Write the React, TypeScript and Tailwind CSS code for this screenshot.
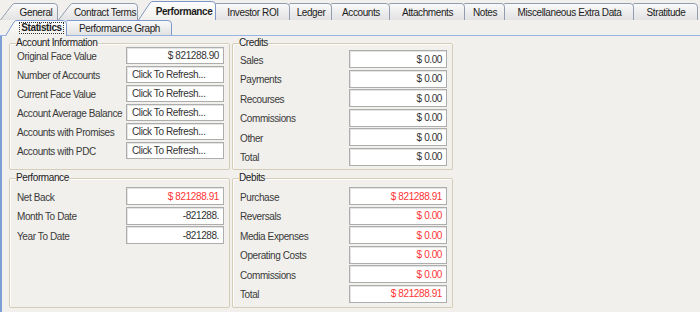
import clsx from 'clsx'

type TabDef = { label: string; w: number; cls: string; active?: boolean }

const TOP_TABS: TabDef[] = [
  { label: 'General', w: 58, cls: 'w-[58px] z-[1]' },
  { label: 'Contract Terms', w: 80, cls: 'w-[80px] z-[2]' },
  { label: 'Performance', w: 78, cls: 'w-[78px] z-[20]', active: true },
  { label: 'Investor ROI', w: 88, cls: 'w-[88px] -ml-[14px] z-[9]' },
  { label: 'Ledger', w: 56, cls: 'w-[56px] -ml-[14px] z-[8]' },
  { label: 'Accounts', w: 72, cls: 'w-[72px] -ml-[14px] z-[7]' },
  { label: 'Attachments', w: 89, cls: 'w-[89px] -ml-[14px] z-[6]' },
  { label: 'Notes', w: 54, cls: 'w-[54px] -ml-[14px] z-[5]' },
  { label: 'Miscellaneous Extra Data', w: 143, cls: 'w-[143px] -ml-[14px] z-[4]' },
  { label: 'Stratitude', w: 78, cls: 'w-[78px] -ml-[14px] z-[3]' },
]

type Row = { label: string; value: string; red?: boolean; left?: boolean }

const ACCOUNT_INFO: Row[] = [
  { label: 'Original Face Value', value: '$ 821288.90' },
  { label: 'Number of Accounts', value: 'Click To Refresh...', left: true },
  { label: 'Current Face Value', value: 'Click To Refresh...', left: true },
  { label: 'Account Average Balance', value: 'Click To Refresh...', left: true },
  { label: 'Accounts with Promises', value: 'Click To Refresh...', left: true },
  { label: 'Accounts with PDC', value: 'Click To Refresh...', left: true },
]

const CREDITS: Row[] = [
  { label: 'Sales', value: '$ 0.00' },
  { label: 'Payments', value: '$ 0.00' },
  { label: 'Recourses', value: '$ 0.00' },
  { label: 'Commissions', value: '$ 0.00' },
  { label: 'Other', value: '$ 0.00' },
  { label: 'Total', value: '$ 0.00' },
]

const PERFORMANCE: Row[] = [
  { label: 'Net Back', value: '$ 821288.91', red: true },
  { label: 'Month To Date', value: '-821288.' },
  { label: 'Year To Date', value: '-821288.' },
]

const DEBITS: Row[] = [
  { label: 'Purchase', value: '$ 821288.91', red: true },
  { label: 'Reversals', value: '$ 0.00', red: true },
  { label: 'Media Expenses', value: '$ 0.00', red: true },
  { label: 'Operating Costs', value: '$ 0.00', red: true },
  { label: 'Commissions', value: '$ 0.00', red: true },
  { label: 'Total', value: '$ 821288.91', red: true },
]

// tab outline: slanted left side, rounded top-right corner, open bottom
function tabPath(w: number, h: number, s: number) {
  return `M0.5 ${h} L${s - 2} 2 Q${s - 1} 0.5 ${s + 1} 0.5 L${w - 4} 0.5 Q${w - 0.5} 0.5 ${w - 0.5} 4 L${w - 0.5} ${h}`
}

function TabShape({ w, h, s, active, id, stroke }: { w: number; h: number; s: number; active?: boolean; id: string; stroke: string }) {
  const d = tabPath(w, h, s)
  return (
    <svg className="absolute left-0 top-0" width={w} height={h} viewBox={`0 0 ${w} ${h}`}>
      <defs>
        <linearGradient id={id} x1="0" y1="0" x2="0" y2="1">
          <stop offset="0" stopColor={active ? '#ffffff' : '#fafafa'} />
          <stop offset="1" stopColor={active ? '#f1f0ec' : '#e2e2e2'} />
        </linearGradient>
      </defs>
      <path d={d + ' Z'} fill={`url(#${id})`} />
      <path d={d} fill="none" stroke={stroke} strokeWidth="1" />
    </svg>
  )
}

function TopTab({ tab, i }: { tab: TabDef; i: number }) {
  const h = tab.active ? 19 : 17
  return (
    <div className={clsx('relative shrink-0', tab.cls, tab.active ? 'h-[19px]' : 'h-[17px]')}>
      <TabShape w={tab.w} h={h} s={14} active={tab.active} id={`top-tab-${i}`} stroke={tab.active ? '#7f97c4' : '#929daf'} />
      <div
        className={clsx(
          'relative flex h-full items-center justify-center pl-[14px] text-[#1c1c1c] whitespace-nowrap',
          tab.active ? 'font-bold pt-[1px]' : 'pt-[1px]'
        )}
      >
        {tab.label}
      </div>
    </div>
  )
}

function Field({ row, h }: { row: Row; h: string }) {
  return (
    <div className="flex items-center">
      <span className="pl-[7px] pt-[2px] text-[#3a3a3a] whitespace-nowrap">{row.label}</span>
      <div
        className={clsx(
          'ml-auto mr-[5px] flex w-[98px] items-center overflow-hidden whitespace-nowrap border border-[#adadad] bg-white shadow-[inset_1px_1px_0_#e4e4e4]',
          h,
          row.left ? 'justify-start pl-[5px]' : 'justify-end pr-[4px]',
          row.red ? 'text-[#ff3434]' : 'text-[#333333]'
        )}
      >
        {row.value}
      </div>
    </div>
  )
}

function Group({ title, rows, listCls, fieldH }: { title: string; rows: Row[]; listCls: string; fieldH: string }) {
  return (
    <fieldset className="h-full min-w-0 rounded-[2px] border border-[#d4cdb8] p-0 shadow-[inset_1px_1px_0_#fdfdfb]">
      <legend className="ml-[6px] px-0 leading-[12px] text-[#222]">{title}</legend>
      <div className={clsx('flex flex-col', listCls)}>
        {rows.map((r) => (
          <Field key={r.label} row={r} h={fieldH} />
        ))}
      </div>
    </fieldset>
  )
}

export default function App() {
  return (
    <div className="relative h-[312px] w-[700px] overflow-hidden bg-[#f1f0ec] font-['Liberation_Sans',Arial,sans-serif] text-[10px] tracking-[-0.4px]">
      {/* main tab strip */}
      <div className="flex h-[20px] items-end">
        {TOP_TABS.map((t, i) => (
          <TopTab key={t.label} tab={t} i={i} />
        ))}
      </div>

      {/* sub tab strip */}
      <div className="flex h-[16px] items-start border-b border-[#98b4e4] pl-[5px]">
        <div className="relative z-[2] h-[16px] w-[62px] shrink-0">
          <TabShape w={62} h={16} s={11} active id="sub-tab-0" stroke="#7d9bd0" />
          <div className="relative flex h-full items-center justify-center pl-[11px] pb-[1px]">
            <span className="border border-dotted border-[#333] px-[1px] leading-[10px] font-bold text-[#1c1c1c]">Statistics</span>
          </div>
        </div>
        <div className="relative z-[1] -ml-[11px] h-[15px] w-[116px] shrink-0">
          <TabShape w={116} h={15} s={11} id="sub-tab-1" stroke="#7d9bd0" />
          <div className="relative flex h-full items-center justify-center pl-[11px] pt-[1px] text-[#1c1c1c]">
            Performance Graph
          </div>
        </div>
      </div>

      {/* panel */}
      <div className="h-[276px] border-l-2 border-[#7f9ed6] pl-[7px] pt-[1px]">
        <div className="grid grid-cols-[221px_221px] grid-rows-[133px_136px] gap-[2px]">
          <Group title="Account Information" rows={ACCOUNT_INFO} listCls="-mt-[2px] gap-[2px]" fieldH="h-[17px]" />
          <Group title="Credits" rows={CREDITS} listCls="mt-[1px] gap-[1.5px]" fieldH="h-[18px]" />
          <Group title="Performance" rows={PERFORMANCE} listCls="mt-[3px] gap-[1.5px]" fieldH="h-[18px]" />
          <Group title="Debits" rows={DEBITS} listCls="mt-[3px] gap-[1.5px]" fieldH="h-[18px]" />
        </div>
      </div>
    </div>
  )
}
